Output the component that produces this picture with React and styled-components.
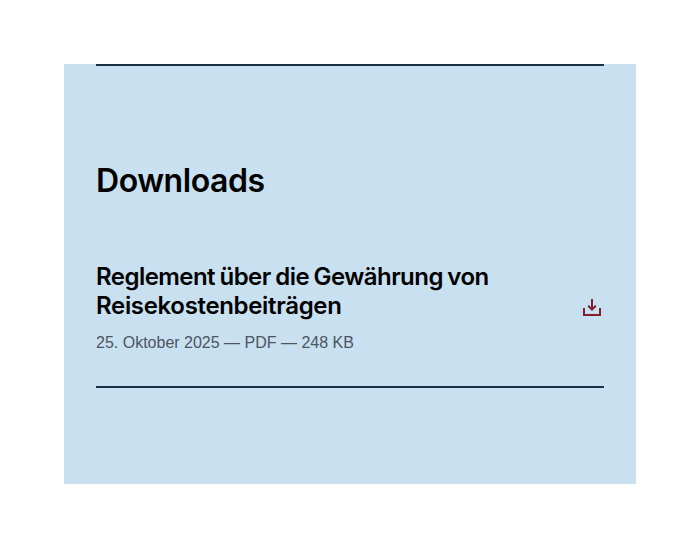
import React from "react";
import styled, { createGlobalStyle } from "styled-components";

const GlobalStyle = createGlobalStyle`
  * { box-sizing: border-box; }
  body { margin: 0; background: #fff; font-family: "Liberation Sans", Arial, sans-serif; }
`;
const Page = styled.main`
  padding: 64px;
`;
const Section = styled.section`
  height: 420px;
  padding: 0 32px;
  background: #c8e0ef;
`;
const Content = styled.div`
  border-top: 2px solid #1a3043;
`;
const Heading = styled.h2`
  margin: 0;
  padding-top: 95px;
  font-family: Inter, sans-serif;
  font-size: 32px;
  font-weight: 600;
  line-height: 40px;
  letter-spacing: -0.45px;
  color: #000;
`;
const Item = styled.a`
  display: flex;
  align-items: center;
  justify-content: space-between;
  margin-top: 61px;
  padding-bottom: 31px;
  border-bottom: 2px solid #1a3043;
  color: #000;
  text-decoration: none;
`;
const Title = styled.h3`
  margin: 0;
  font-family: Inter, sans-serif;
  font-size: 24px;
  font-weight: 600;
  line-height: 29px;
`;
const TitleLine = styled.span`
  display: block;
  letter-spacing: ${({ $tracking }) => $tracking};
  word-spacing: -1px;
`;
const Meta = styled.p`
  margin: 11px 0 0;
  font-size: 16px;
  line-height: 24px;
  color: #4c5564;
`;
const Icon = styled.svg`
  flex: none;
  width: 24px;
  height: 24px;
  margin-bottom: 1px;
  color: #821f2e;
`;

export default function App() {
  return (
    <>
      <GlobalStyle />
      <Page>
        <Section>
          <Content>
            <Heading>Downloads</Heading>
            <Item>
              <div>
                <Title>
                  <TitleLine $tracking="-0.55px">Reglement über die Gewährung von</TitleLine>
                  <TitleLine $tracking="-0.33px">Reisekostenbeiträgen</TitleLine>
                </Title>
                <Meta>25. Oktober 2025 — PDF — 248 KB</Meta>
              </div>
              <Icon viewBox="0 0 24 24" fill="none" stroke="currentColor" strokeWidth="2">
                <path d="M12 3v10.5M8.2 9.8l3.8 3.8 3.8-3.8M4 12v7h16v-7" />
              </Icon>
            </Item>
          </Content>
        </Section>
      </Page>
    </>
  );
}
